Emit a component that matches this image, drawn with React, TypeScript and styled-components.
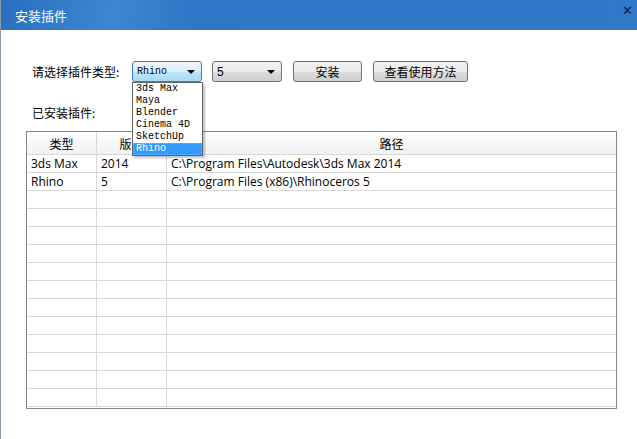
import React, { FC } from 'react';
import styled, { createGlobalStyle } from 'styled-components';

const GlobalStyle = createGlobalStyle`
  html, body {
    margin: 0;
    padding: 0;
    background: #ffffff;
  }
`;

const Window = styled.div`
  width: 637px;
  height: 439px;
  overflow: hidden;
  position: relative;
  font-family: 'Noto Sans CJK SC', 'Noto Sans', sans-serif;
  font-size: 12px;
  color: #000;
  background: #fff;
  border-left: 1px solid #8d9aa8;
  box-sizing: border-box;
`;

const TitleBar = styled.div`
  height: 30px;
  display: flex;
  align-items: center;
  justify-content: space-between;
  padding: 0 4px 0 14px;
  background: linear-gradient(100deg, #2a6fc0 0%, #3d86d2 18%, #2f77c6 30%, #3079c8 100%);
  color: #fff;
  font-size: 13px;
`;

const CloseX = styled.span`
  font-family: 'DejaVu Sans', sans-serif;
  font-size: 13px;
  font-weight: bold;
  color: #10203a;
  align-self: flex-start;
  margin-top: 3px;
`;

const Body = styled.div`
  padding: 31px 20px 0 25px;
`;

const ToolRow = styled.div`
  display: flex;
  align-items: center;
  height: 21px;
  padding-left: 6px;
`;

const Label = styled.span`
  width: 100px;
  white-space: nowrap;
`;

const SelectWrap = styled.div<{ $w: number; $gap: number }>`
  position: relative;
  width: ${(p) => p.$w}px;
  margin-right: ${(p) => p.$gap}px;
`;

const SelectBox = styled.div<{ $focus?: boolean }>`
  height: 21px;
  box-sizing: border-box;
  border: 1px solid ${(p) => (p.$focus ? '#3c7fb1' : '#707070')};
  border-radius: 3px;
  background: ${(p) =>
    p.$focus
      ? 'linear-gradient(#eaf6fd 0%, #d9f0fc 50%, #bee6fd 51%, #a7d9f5 100%)'
      : 'linear-gradient(#f2f2f2 0%, #ebebeb 50%, #dddddd 51%, #cfcfcf 100%)'};
  display: flex;
  align-items: center;
  justify-content: space-between;
  padding: 0 6px 0 4px;
`;

const MonoText = styled.span`
  font-family: 'Liberation Mono', 'DejaVu Sans Mono', monospace;
  font-size: 10px;
`;

const PlainText = styled.span`
  font-family: 'Liberation Sans', sans-serif;
  font-size: 12px;
`;

const Arrow = styled.span`
  width: 0;
  height: 0;
  border-left: 4px solid transparent;
  border-right: 4px solid transparent;
  border-top: 4px solid #000;
`;

const DropList = styled.div`
  position: absolute;
  left: 0;
  top: 21px;
  width: 71px;
  box-sizing: border-box;
  border: 1px solid #646464;
  background: #fff;
  z-index: 5;
  box-shadow: 2px 2px 2px rgba(0, 0, 0, 0.25);
`;

const DropItem = styled.div<{ $active?: boolean }>`
  height: 12px;
  line-height: 12px;
  overflow: hidden;
  padding-left: 3px;
  font-family: 'Liberation Mono', 'DejaVu Sans Mono', monospace;
  font-size: 10px;
  background: ${(p) => (p.$active ? '#3399ff' : 'transparent')};
  color: ${(p) => (p.$active ? '#fff' : '#000')};
  outline: ${(p) => (p.$active ? '1px dotted #e8a040' : 'none')};
  outline-offset: -1px;
`;

const Button = styled.div<{ $w: number }>`
  width: ${(p) => p.$w}px;
  height: 21px;
  box-sizing: border-box;
  border: 1px solid #707070;
  border-radius: 3px;
  background: linear-gradient(#f2f2f2 0%, #ebebeb 50%, #dddddd 51%, #cfcfcf 100%);
  display: flex;
  align-items: center;
  justify-content: center;
  margin-right: 11px;
  font-size: 12px;
`;

const SubLabel = styled.div`
  margin-top: 20px;
  padding-left: 6px;
  height: 21px;
  line-height: 21px;
`;

const Table = styled.div`
  margin-top: 8px;
  width: 591px;
  height: 278px;
  box-sizing: border-box;
  border: 1px solid #828790;
  overflow: hidden;
`;

const Row = styled.div<{ $head?: boolean }>`
  display: grid;
  grid-template-columns: 70px 70px 1fr;
  height: ${(p) => (p.$head ? 23 : 18)}px;
  background: ${(p) => (p.$head ? 'linear-gradient(#ffffff 0%, #f7f8f9 40%, #f1f2f3 100%)' : '#fff')};
  border-bottom: 1px solid #d8d8d8;
  box-sizing: border-box;
`;

const Cell = styled.div<{ $head?: boolean }>`
  border-right: 1px solid #d8d8d8;
  display: flex;
  align-items: center;
  justify-content: ${(p) => (p.$head ? 'center' : 'flex-start')};
  padding-left: ${(p) => (p.$head ? 0 : 4)}px;
  font-family: ${(p) =>
    p.$head ? "'Noto Sans CJK SC', sans-serif" : "'Open Sans', 'Noto Sans', sans-serif"};
  font-size: 12px;
  white-space: nowrap;
  overflow: hidden;
  &:last-child {
    border-right: none;
  }
`;

const plugins = ['3ds Max', 'Maya', 'Blender', 'Cinema 4D', 'SketchUp', 'Rhino'];

const installed = [
  ['3ds Max', '2014', 'C:\\Program Files\\Autodesk\\3ds Max 2014'],
  ['Rhino', '5', 'C:\\Program Files (x86)\\Rhinoceros 5'],
];

const App: FC = () => {
  const blanks = Array.from({ length: 14 - installed.length });
  return (
    <Window>
      <GlobalStyle />
      <TitleBar>
        <span>安装插件</span>
        <CloseX>✕</CloseX>
      </TitleBar>
      <Body>
        <ToolRow>
          <Label>请选择插件类型:</Label>
          <SelectWrap $w={70} $gap={10}>
            <SelectBox $focus>
              <MonoText>Rhino</MonoText>
              <Arrow />
            </SelectBox>
            <DropList>
              {plugins.map((p) => (
                <DropItem key={p} $active={p === 'Rhino'}>
                  {p}
                </DropItem>
              ))}
            </DropList>
          </SelectWrap>
          <SelectWrap $w={70} $gap={11}>
            <SelectBox>
              <PlainText>5</PlainText>
              <Arrow />
            </SelectBox>
          </SelectWrap>
          <Button $w={69}>安装</Button>
          <Button $w={95}>查看使用方法</Button>
        </ToolRow>
        <SubLabel>已安装插件:</SubLabel>
        <Table>
          <Row $head>
            <Cell $head>类型</Cell>
            <Cell $head>版本</Cell>
            <Cell $head>路径</Cell>
          </Row>
          {installed.map((r) => (
            <Row key={r[0]}>
              {r.map((c, i) => (
                <Cell key={i}>{c}</Cell>
              ))}
            </Row>
          ))}
          {blanks.map((_, i) => (
            <Row key={'b' + i}>
              <Cell />
              <Cell />
              <Cell />
            </Row>
          ))}
        </Table>
      </Body>
    </Window>
  );
};

export default App;
